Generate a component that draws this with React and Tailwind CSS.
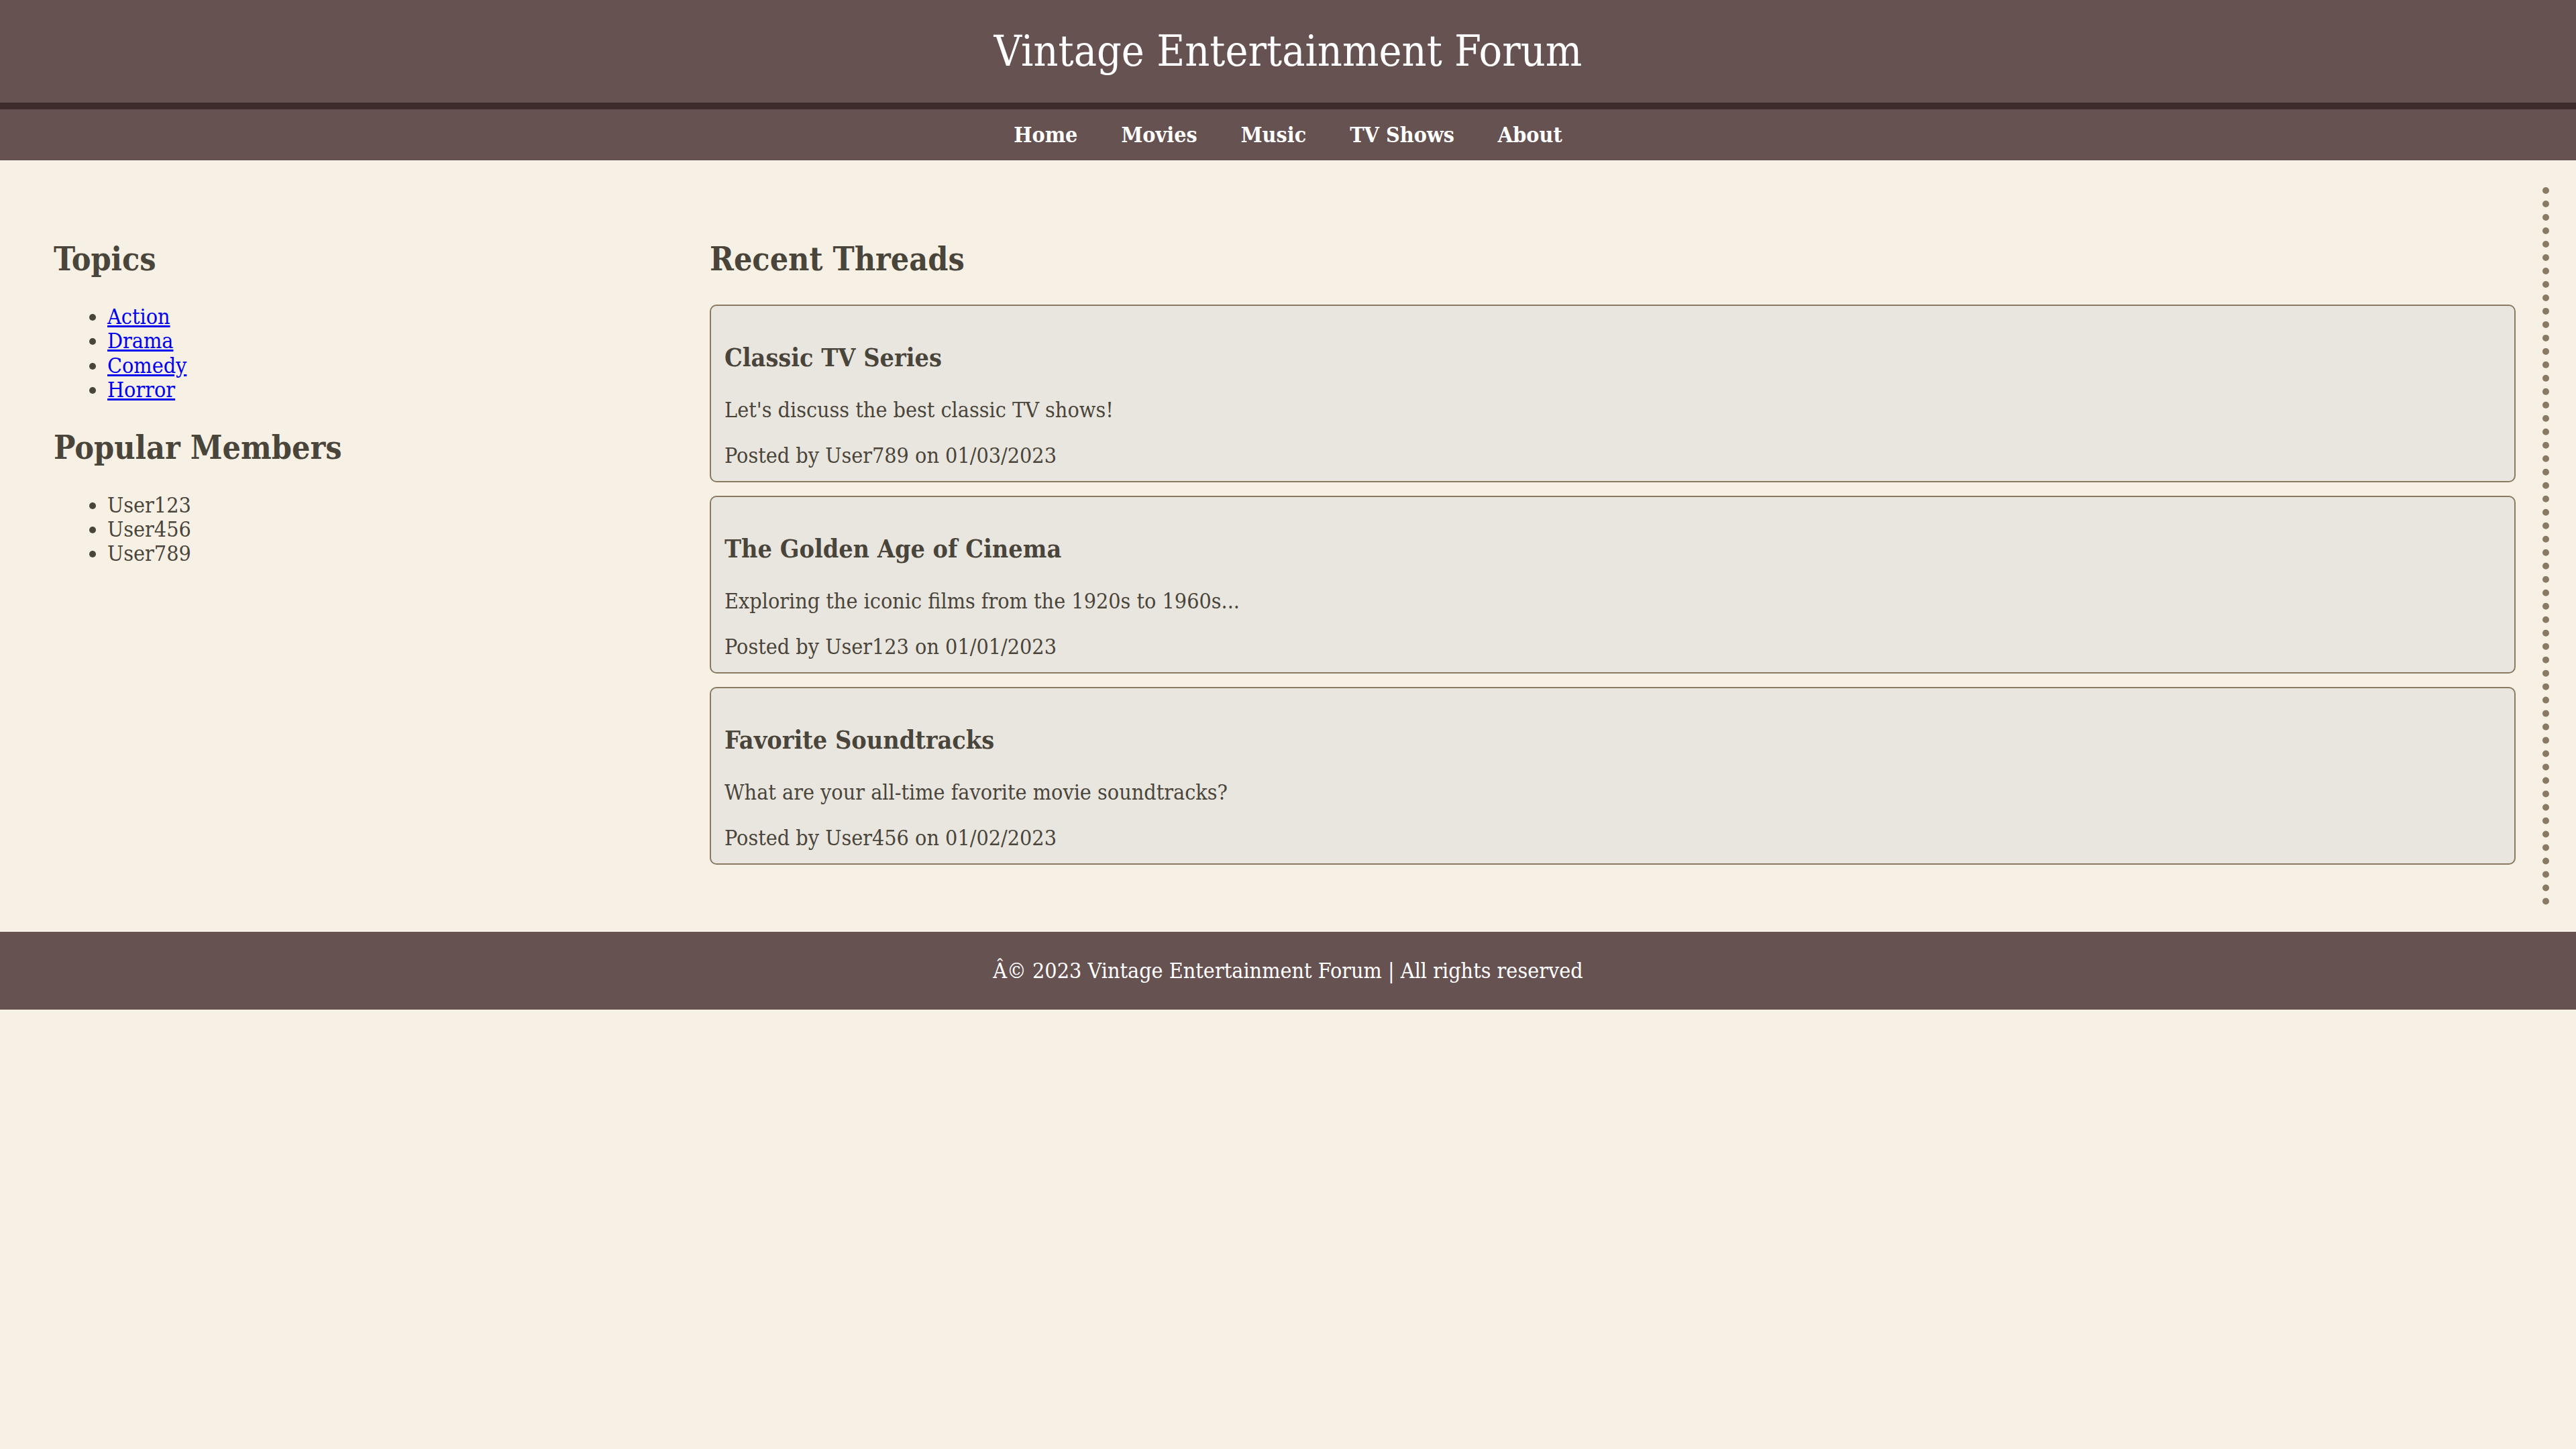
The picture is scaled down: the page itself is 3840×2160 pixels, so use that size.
const navLinks = ['Home', 'Movies', 'Music', 'TV Shows', 'About']

const topics = ['Action', 'Drama', 'Comedy', 'Horror']
const members = ['User123', 'User456', 'User789']

const threads = [
  { title: 'Classic TV Series', body: "Let's discuss the best classic TV shows!", user: 'User789', date: '01/03/2023' },
  { title: 'The Golden Age of Cinema', body: 'Exploring the iconic films from the 1920s to 1960s...', user: 'User123', date: '01/01/2023' },
  { title: 'Favorite Soundtracks', body: 'What are your all-time favorite movie soundtracks?', user: 'User456', date: '01/02/2023' },
]

function ThreadCard({ title, body, user, date }) {
  return (
    <div className="mb-[20px] rounded-[10px] border-2 border-[#8b7a62] bg-[#e9e5df] px-[20px] py-[20px]">
      <h3 className="mt-[36px] mb-[38px] text-[37.44px] font-bold leading-[43px]">{title}</h3>
      <p className="mb-[32px] leading-[36px]">{body}</p>
      <p className="leading-[36px]">
        Posted by {user} on {date}
      </p>
    </div>
  )
}

export default function App() {
  return (
    <div
      className="min-h-screen bg-[#f7f0e5] text-[32px] text-[#4a453b]"
      style={{ fontFamily: "'DejaVu Serif Condensed', 'Liberation Serif', serif" }}
    >
      <header className="border-b-[10px] border-[#3d2b2b] bg-[#675252] py-[40px] text-center">
        <h1 className="text-[64px] font-normal leading-[73px] text-white">Vintage Entertainment Forum</h1>
      </header>

      <nav className="flex justify-center gap-[65px] bg-[#675252] py-[20px] leading-[36px]">
        {navLinks.map((label) => (
          <a key={label} href="#" className="font-bold text-white">
            {label}
          </a>
        ))}
      </nav>

      <div className="m-[40px] flex border-r-[10px] border-dotted border-[#8b7a62] p-[40px]">
        <aside className="w-[978px] shrink-0">
          <h2 className="my-[40px] text-[48px] font-bold leading-[55px]">Topics</h2>
          <ul className="my-[32px] list-disc pl-[80px] leading-[36.4px]">
            {topics.map((t) => (
              <li key={t}>
                <a href="#" className="text-[#0000ee] underline">
                  {t}
                </a>
              </li>
            ))}
          </ul>
          <h2 className="my-[40px] text-[48px] font-bold leading-[55px]">Popular Members</h2>
          <ul className="my-[32px] list-disc pl-[80px] leading-[36.4px]">
            {members.map((m) => (
              <li key={m}>{m}</li>
            ))}
          </ul>
        </aside>

        <main className="flex-1">
          <h2 className="my-[40px] text-[48px] font-bold leading-[55px]">Recent Threads</h2>
          {threads.map((t) => (
            <ThreadCard key={t.title} {...t} />
          ))}
        </main>
      </div>

      <footer className="bg-[#675252] py-[40px] text-center leading-[36px] text-white">
        Â© 2023 Vintage Entertainment Forum | All rights reserved
      </footer>
    </div>
  )
}
